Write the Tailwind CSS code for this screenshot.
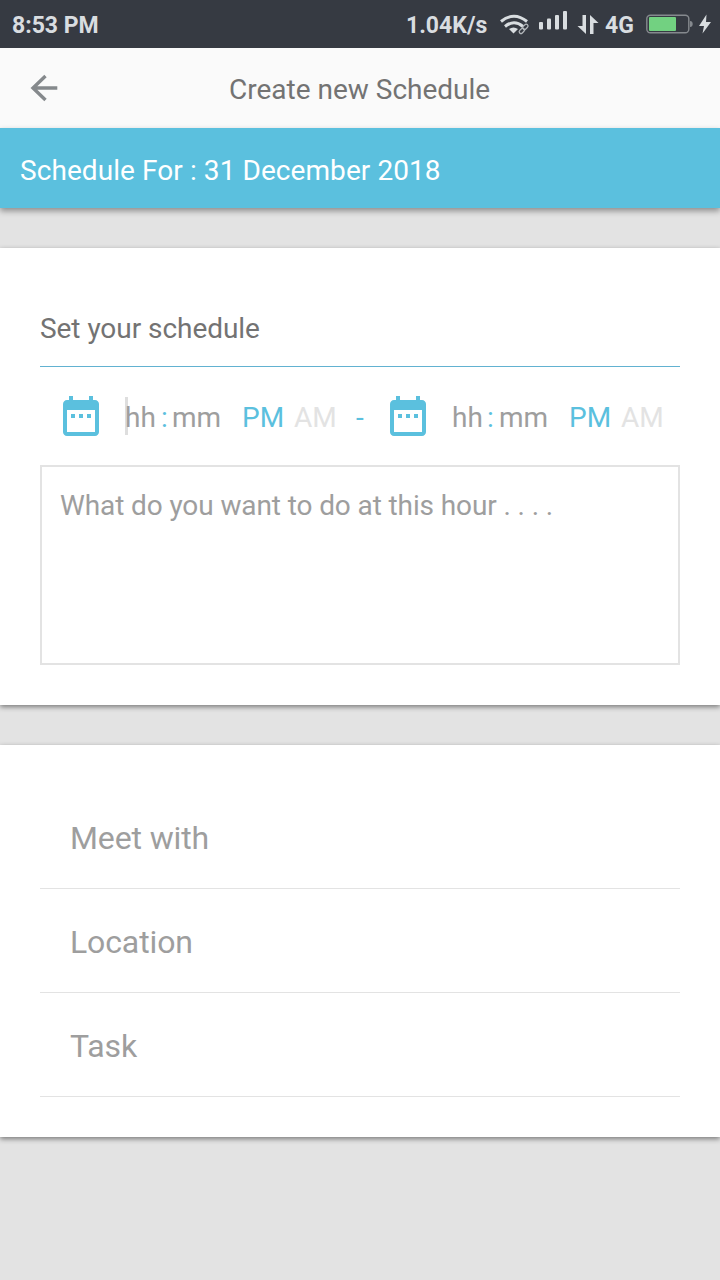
<!DOCTYPE html>
<html lang="en">
<head>
<meta charset="utf-8">
<title>Create new Schedule</title>
<script src="https://cdn.jsdelivr.net/npm/@tailwindcss/browser@4"></script>
</head>
<body class="w-[720px] h-[1280px] overflow-hidden bg-[#e3e3e3] font-['Roboto',sans-serif] text-[28px] leading-8 whitespace-nowrap">
<svg class="hidden">
  <symbol id="calendar" viewBox="0 0 24 24"><path fill="currentColor" d="M9 11H7v2h2v-2zm4 0h-2v2h2v-2zm4 0h-2v2h2v-2zm2-7h-1V2h-2v2H8V2H6v2H5c-1.11 0-1.99.9-1.99 2L3 20c0 1.100.89 2 2 2h14c1.100 0 2-.9 2-2V6c0-1.100-.9-2-2-2zm0 16H5V9h14v11z"/></symbol>
</svg>
<div class="h-12 bg-[#363a42] text-[#d9dde0] flex items-center justify-between pl-3 text-[23px] font-bold">
  <span class="pt-1">8:53 PM</span>
  <div class="flex items-center">
    <span class="pt-1 w-[88px]">1.04K/s</span>
    <svg class="w-[226px] h-12" viewBox="494 0 226 48" fill="none">
      <g stroke="#d9dde0" stroke-width="3">
        <path d="M501 21.500Q514 11 527 21.500"/>
        <path d="M505 26.500Q514 19 523 26.500"/>
      </g>
      <path d="M509 29Q513.500 26 518 29L513.500 33.500Z" fill="#d9dde0"/>
      <g stroke="#b4b8bc" stroke-width="1.200">
        <rect x="519" y="29" width="6" height="3.600" rx="1.800" transform="rotate(-45 522 31)"/>
        <rect x="522.500" y="25" width="6" height="3.600" rx="1.800" transform="rotate(-45 525.500 27)"/>
      </g>
      <g fill="#d9dde0">
        <rect x="539" y="22" width="4" height="7.500" rx="1"/>
        <rect x="547" y="18.500" width="4" height="11" rx="1"/>
        <rect x="555" y="15" width="4" height="14.500" rx="1"/>
        <rect x="563" y="11" width="4" height="18.500" rx="1"/>
        <path d="M582.500 15H586V34L577.500 26H582.500Z"/>
        <path d="M590 15L598.500 23H593.500V34H590Z"/>
        <path d="M706.500 14.500L699 26H704L702.500 33.500L711 22H706Z"/>
      </g>
      <text x="605" y="33" fill="#d9dde0" font-size="23" font-weight="700" font-family="Roboto">4G</text>
      <rect x="646.800" y="15.300" width="42" height="17.400" rx="3.500" stroke="#85898e" stroke-width="1.400"/>
      <rect x="649" y="17" width="27" height="14" rx="1" fill="#72d181"/>
      <path d="M690 21Q692.700 21 692.700 24T690 27Z" fill="#85898e"/>
    </svg>
  </div>
</div>
<header class="h-20 bg-[#fafafa] grid grid-cols-[229px_1fr] items-center text-[#737373]">
  <svg class="w-[30px] h-[30px] ml-[29px]" viewBox="29 73 30 30" fill="none" stroke="#85898c" stroke-width="3.400"><path d="M57.300 88H33M45.500 76L33 88L45.500 100"/></svg>
  <h1 class="pt-1">Create new Schedule</h1>
</header>
<div class="h-20 bg-[#5bc0de] text-white flex items-center px-5 pt-1.5 tracking-[0.075px] shadow-[0_3px_6px_rgba(0,0,0,0.38)]">Schedule For : 31 December 2018</div>
<section class="mt-10 h-[457px] bg-white px-10 pt-16 shadow-[0_2px_5px_rgba(0,0,0,0.46)]">
  <h2 class="h-[55px] pt-px border-b border-[#62b2d1] text-[#737373] tracking-[-0.05px]">Set your schedule</h2>
  <div class="h-[98px] pl-[17px] pt-[25px] grid grid-cols-[68px_36px_11px_70px_52px_62px_28px_68px_35px_12px_70px_52px_1fr] text-[#9e9e9e]">
    <svg class="size-12 text-[#5bc0de]"><use href="#calendar"/></svg>
    <span class="pt-2.5 relative"><i class="absolute left-0 top-[5px] w-[3px] h-[38px] bg-[#dedede]"></i><span class="relative">hh</span></span>
    <span class="pt-2.5 text-[#5bc0de]">:</span>
    <span class="pt-2.5">mm</span>
    <span class="pt-2.5 text-[#5bc0de]">PM</span>
    <span class="pt-2.5 text-[#e3e3e3]">AM</span>
    <span class="pt-2.5 text-[#5bc0de]">-</span>
    <svg class="size-12 text-[#5bc0de]"><use href="#calendar"/></svg>
    <span class="pt-2.5">hh</span>
    <span class="pt-2.5 text-[#5bc0de]">:</span>
    <span class="pt-2.5">mm</span>
    <span class="pt-2.5 text-[#5bc0de]">PM</span>
    <span class="pt-2.5 text-[#e3e3e3]">AM</span>
  </div>
  <div class="h-[200px] border-2 border-[#e3e3e3] px-[18px] pt-[23px] text-[#9e9e9e] tracking-[-0.11px]">What do you want to do at this hour . . . .</div>
</section>
<section class="mt-10 h-[392px] bg-white px-10 pt-10 text-[32px] text-[#9e9e9e] tracking-[-0.12px] shadow-[0_2px_5px_rgba(0,0,0,0.46)]">
  <div class="h-[104px] border-b border-[#e3e3e3] px-[30px] pt-[37px]">Meet with</div>
  <div class="h-[104px] border-b border-[#e3e3e3] px-[30px] pt-[37px]">Location</div>
  <div class="h-[104px] border-b border-[#e3e3e3] px-[30px] pt-[37px]">Task</div>
</section>
</body>
</html>
